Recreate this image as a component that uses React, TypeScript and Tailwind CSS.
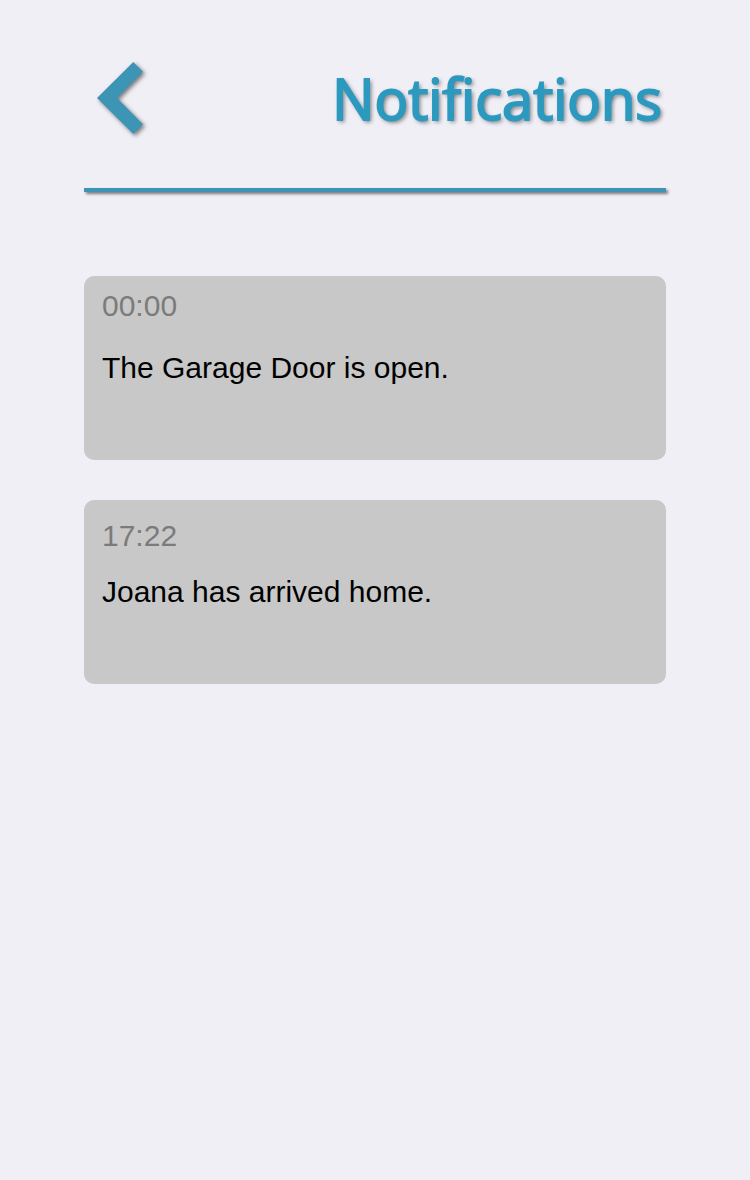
const notifications = [
  { time: "00:00", text: "The Garage Door is open.", timeRow: "pt-3" },
  { time: "17:22", text: "Joana has arrived home.", timeRow: "pt-[18px]" },
];

export default function App() {
  return (
    <div className="min-h-screen bg-[#f0eff6] px-[84px] pt-[60px] font-['Liberation_Sans',Arial,sans-serif]">
      <header>
        <div className="flex items-start justify-between pr-1 pb-[50px] pl-3">
          <button type="button" aria-label="Back" className="cursor-pointer">
            <svg viewBox="0 0 52 78" className="h-[78px] w-[52px] overflow-visible drop-shadow-[2px_2px_2px_rgba(0,0,0,0.5)]" aria-hidden="true">
              <path d="M37.3 2 L1 38 L37.3 74 L47 64.3 L21 38 L47 11.7 Z" fill="#3d95b5" />
            </svg>
          </button>
          <h1 className="font-['Trebuchet_MS','Open_Sans',sans-serif] text-[56px] leading-[76px] font-normal text-[#2c99bf] [-webkit-text-stroke:2px_#2c99bf] [text-shadow:2px_2px_4px_rgba(0,0,0,0.55)]">
            Notifications
          </h1>
        </div>
        <div className="h-1 bg-[#3d95b5] shadow-[2px_2px_3px_rgba(0,0,0,0.5)]" />
      </header>
      <main className="mt-[84px]">
        <ul className="flex flex-col gap-10">
          {notifications.map((n) => (
            <li key={n.time} className="h-[184px] rounded-[10px] bg-[#c8c8c8] px-[18px] text-[30px] leading-9">
              <div className={n.timeRow + " h-[74px]"}>
                <time className="block text-[#7b7b7b]">{n.time}</time>
              </div>
              <p className="text-black">{n.text}</p>
            </li>
          ))}
        </ul>
      </main>
    </div>
  );
}
